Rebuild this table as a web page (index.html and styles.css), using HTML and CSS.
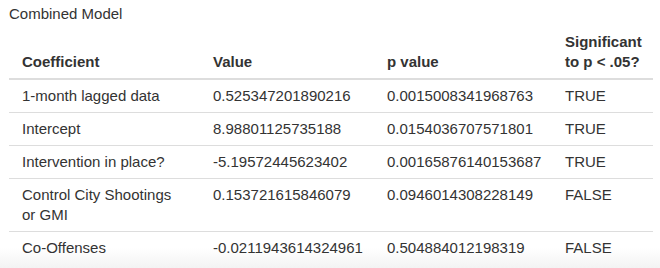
FILE: index.html
```html
<!DOCTYPE html>
<html>
<head>
<meta charset="utf-8">
<link rel="stylesheet" href="styles.css">
</head>
<body>
<div class="title">Combined Model</div>
<table class="model">
  <colgroup>
    <col class="c1"><col class="c2"><col class="c3"><col class="c4">
  </colgroup>
  <thead>
    <tr>
      <th>Coefficient</th>
      <th>Value</th>
      <th>p value</th>
      <th>Significant<br>to p &lt; .05?</th>
    </tr>
  </thead>
  <tbody>
    <tr><td>1-month lagged data</td><td>0.525347201890216</td><td>0.0015008341968763</td><td>TRUE</td></tr>
    <tr><td>Intercept</td><td>8.98801125735188</td><td>0.0154036707571801</td><td>TRUE</td></tr>
    <tr><td>Intervention in place?</td><td>-5.19572445623402</td><td>0.00165876140153687</td><td>TRUE</td></tr>
    <tr><td>Control City Shootings or GMI</td><td>0.153721615846079</td><td>0.0946014308228149</td><td>FALSE</td></tr>
    <tr><td>Co-Offenses</td><td>-0.0211943614324961</td><td>0.504884012198319</td><td>FALSE</td></tr>
  </tbody>
</table>
</body>
</html>
```
FILE: styles.css
```css
html {
  height: 100%;
  background: linear-gradient(to bottom, #ffffff 0, #ffffff 248px, #f3f3f3 268px);
}
body {
  margin: 0;
  padding: 4px 7px 0 9px;
  font-family: "Liberation Sans", Arial, Helvetica, sans-serif;
  color: #333333;
}
.title {
  font-size: 15px;
  line-height: 20px;
  height: 20px;
}
.model {
  width: 644px;
  table-layout: fixed;
  border-collapse: collapse;
  font-size: 15px;
  line-height: 20px;
}
.c1 { width: 191px; }
.c2 { width: 174px; }
.c3 { width: 178px; }
.c4 { width: 101px; }
.model th {
  text-align: left;
  vertical-align: bottom;
  font-weight: bold;
  padding: 8px 13px 6px;
  border-bottom: 2px solid #dddddd;
}
.model td {
  vertical-align: top;
  padding: 6px 13px 6px;
  border-top: 1px solid #dddddd;
}
.model tbody tr:first-child td {
  border-top: none;
}
```
